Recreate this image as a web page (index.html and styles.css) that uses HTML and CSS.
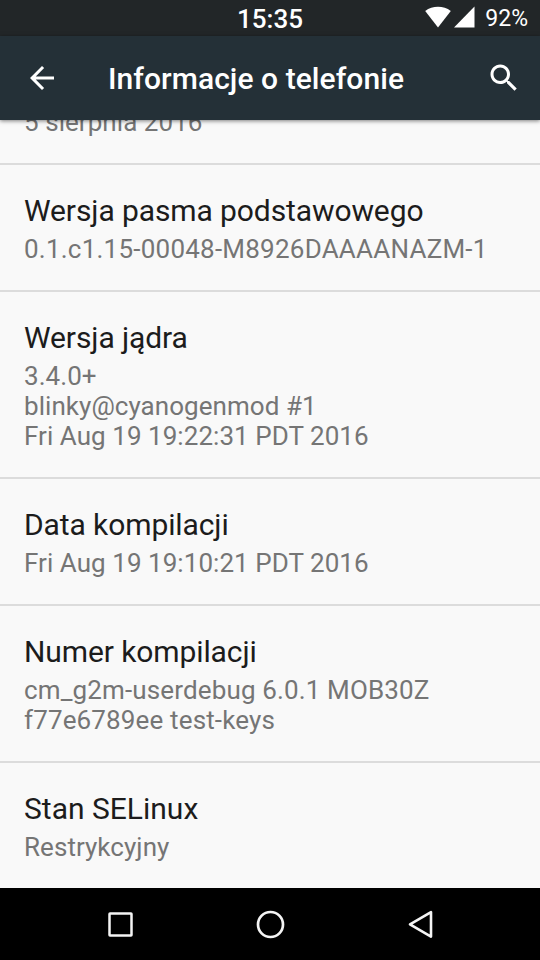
FILE: index.html
```
<!DOCTYPE html>
<html lang="pl">
<head>
  <meta charset="UTF-8">
  <meta name="viewport" content="width=device-width, initial-scale=1.0">
  <title>Informacje o telefonie</title>
  <link rel="stylesheet" href="styles.css">
</head>
<body>
  <div class="screen">
    <!-- Status bar -->
    <div class="status-bar">
      <span class="clock">15:35</span>
      <div class="status-icons">
        <svg class="wifi" width="26" height="22" viewBox="0 0 26 22">
          <path d="M13 21.500L0.200 5C4 2.200 8.300 0.800 13 0.800S22 2.200 25.800 5z" fill="#fff"/>
        </svg>
        <svg class="signal" width="21" height="22" viewBox="0 0 21 22">
          <path d="M0 21.500L20.500 0.500v21z" fill="#fff"/>
        </svg>
        <span class="battery">92%</span>
      </div>
    </div>

    <!-- Toolbar -->
    <header class="toolbar">
      <svg class="back" width="36" height="36" viewBox="0 0 24 24">
        <path d="M20 11H7.830l5.590-5.590L12 4l-8 8 8 8 1.410-1.410L7.830 13H20v-2z" fill="#fff"/>
      </svg>
      <h1>Informacje o telefonie</h1>
      <svg class="search" width="36" height="36" viewBox="0 0 24 24">
        <path d="M15.500 14h-.79l-.28-.27C15.410 12.590 16 11.110 16 9.500 16 5.910 13.090 3 9.500 3S3 5.910 3 9.500 5.910 16 9.500 16c1.610 0 3.090-.59 4.230-1.570l.27.28v.79l5 4.990L20.490 19l-4.990-5zm-6 0C7.010 14 5 11.990 5 9.500S7.010 5 9.500 5 14 7.010 14 9.500 11.990 14 9.500 14z" fill="#fff"/>
      </svg>
    </header>

    <!-- Preference list, scrolled part of the way down -->
    <main class="list">
      <div class="item scrolled">
        <p>5 sierpnia 2016</p>
      </div>
      <div class="item">
        <h2>Wersja pasma podstawowego</h2>
        <p class="baseband">0.1.c1.15-00048-M8926DAAAANAZM-1</p>
      </div>
      <div class="item">
        <h2>Wersja jądra</h2>
        <p>3.4.0+<br>blinky@cyanogenmod #1<br>Fri Aug 19 19:22:31 PDT 2016</p>
      </div>
      <div class="item">
        <h2>Data kompilacji</h2>
        <p>Fri Aug 19 19:10:21 PDT 2016</p>
      </div>
      <div class="item">
        <h2>Numer kompilacji</h2>
        <p class="build">cm_g2m-userdebug 6.0.1 MOB30Z<br>f77e6789ee test-keys</p>
      </div>
      <div class="item">
        <h2 class="selinux">Stan SELinux</h2>
        <p>Restrykcyjny</p>
      </div>
    </main>

    <!-- Navigation bar -->
    <nav class="nav-bar">
      <svg width="30" height="30" viewBox="0 0 30 30">
        <rect x="4.500" y="4.500" width="22" height="22" rx="0.500" fill="none" stroke="#f4f4f4" stroke-width="2.500"/>
      </svg>
      <svg width="30" height="30" viewBox="0 0 30 30">
        <circle cx="15.500" cy="15.500" r="12.500" fill="none" stroke="#f4f4f4" stroke-width="2.700"/>
      </svg>
      <svg width="30" height="30" viewBox="0 0 30 30">
        <path d="M26 3.200v24.400L5 15.400z" fill="none" stroke="#f4f4f4" stroke-width="2.600" stroke-linejoin="round"/>
      </svg>
    </nav>
  </div>
</body>
</html>
```

FILE: styles.css
```
body {
  margin: 0;
  font-family: Roboto, "Noto Sans", sans-serif;
  background-color: #f9f9f9;
}
.screen {
  display: flex;
  flex-direction: column;
  width: 540px;
  height: 960px;
  overflow: hidden;
}
.status-bar {
  display: grid;
  grid-template-columns: 1fr auto 1fr;
  align-items: center;
  flex: none;
  height: 36px;
  background-color: #222628;
  color: #fff;
}
.clock {
  grid-column: 2;
  font-size: 26px;
  font-weight: 500;
  line-height: 34px;
  padding-top: 2px;
}
.status-icons {
  display: flex;
  justify-content: flex-end;
  align-items: center;
  padding-right: 12px;
}
.wifi, .signal {
  margin-bottom: 2px;
}
.signal {
  margin-left: 3px;
}
.battery {
  margin-left: 10px;
  padding-top: 1px;
  font-size: 23px;
}
.toolbar {
  display: flex;
  align-items: center;
  flex: none;
  height: 84px;
  padding: 0 18px 0 24px;
  background-color: #243037;
  color: #fff;
  box-shadow: 0 1px 4px rgba(0, 0, 0, 0.5);
  z-index: 1;
}
.toolbar h1 {
  flex: 1;
  margin: 0 0 0 48px;
  padding-top: 2px;
  font-size: 30px;
  font-weight: 500;
  line-height: 36px;
  letter-spacing: 0.06px;
}
.list {
  flex: 1;
  overflow: hidden;
  background-color: #f9f9f9;
}
.item {
  padding: 25px 24px 26px;
  border-bottom: 2px solid #dcdcdc;
}
.item:last-child {
  border-bottom: none;
}
.item h2 {
  margin: 0 0 3px;
  font-size: 30px;
  font-weight: 400;
  line-height: 41px;
  letter-spacing: -0.1px;
  color: #1c1c1c;
}
.item .selinux {
  letter-spacing: 0;
}
.item p {
  margin: 0;
  font-size: 26px;
  line-height: 30px;
  letter-spacing: 0.05px;
  color: #757575;
}
.item .baseband {
  letter-spacing: 0.23px;
}
.item .build {
  letter-spacing: 0.14px;
}
.scrolled {
  margin-top: -13px;
  padding-top: 0;
}
.nav-bar {
  display: flex;
  justify-content: center;
  align-items: center;
  gap: 120px;
  flex: none;
  height: 72px;
  background-color: #000;
}
```
